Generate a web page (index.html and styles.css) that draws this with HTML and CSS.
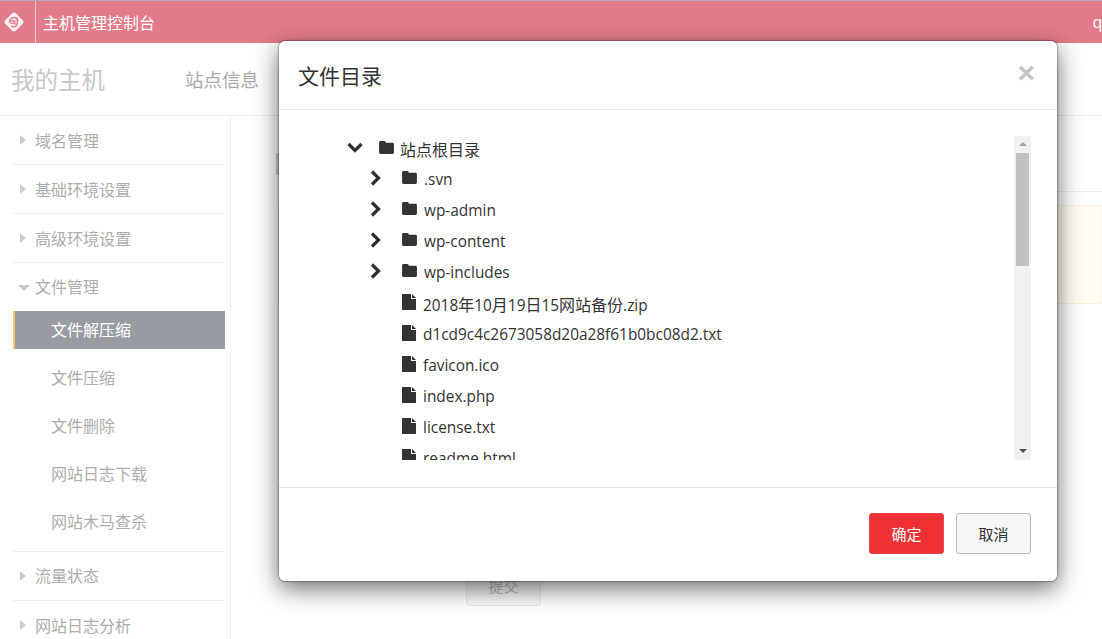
FILE: index.html
```html
<!DOCTYPE html>
<html lang="zh-CN">
<head>
    <meta charset="UTF-8">
    <title>主机管理控制台</title>
    <link rel="stylesheet" href="styles.css">
</head>
<body>
    <svg class="sprites" width="0" height="0">
        <symbol id="i-folder" viewBox="0 0 16 14"><path d="M1.5 0h4.2c.6 0 1 .3 1.2.8l.4 1.2h7.2c.8 0 1.5.7 1.5 1.5v9c0 .8-.7 1.5-1.5 1.5h-13C.7 14 0 13.300 0 12.500v-11C0 .7.700 0 1.500 0z"/></symbol>
        <symbol id="i-file" viewBox="0 0 14 16"><path d="M0 0h9v5h5v11H0z"/><path d="M10 0l4 4h-4z"/></symbol>
        <symbol id="i-right" viewBox="0 0 12 16"><path d="M2 1.500l6.500 6.500L2 14.500" fill="none" stroke="currentColor" stroke-width="3.200"/></symbol>
        <symbol id="i-down" viewBox="0 0 16 12"><path d="M1.500 2l6.500 6.500L14.500 2" fill="none" stroke="currentColor" stroke-width="3.200"/></symbol>
    </svg>

    <header class="topbar">
        <div class="logo-cell">
            <svg class="logo" viewBox="0 0 20 20">
                <path d="M10 .5q1 0 2 1l6.500 6.500q2 2 0 4L12 18.500q-2 2-4 0L1.500 12q-2-2 0-4L8 1.500q1-1 2-1z" fill="#fbeef0"/>
                <path d="M5.500 10.500c0-3 2-5 4.500-5 2.200 0 3.800 1.500 3.800 3.500" fill="none" stroke="#e37c8a" stroke-width="1.500"/>
                <circle cx="8.500" cy="10" r="1.700" fill="none" stroke="#e37c8a" stroke-width="1.200"/>
                <circle cx="12" cy="10.500" r="1.700" fill="none" stroke="#e37c8a" stroke-width="1.200"/>
                <path d="M7 14c2 1.500 4.500 1 6.500-1.500" fill="none" stroke="#e37c8a" stroke-width="1.300"/>
            </svg>
        </div>
        <div class="top-title">主机管理控制台</div>
        <div class="top-user">qq</div>
    </header>

    <div class="subbar">
        <span class="sub-title">我的主机</span>
        <span class="sub-tab">站点信息</span>
    </div>

    <div class="layout">
        <nav class="sidebar">
            <div class="group"><div class="group-head"><i class="tri-right"></i>域名管理</div></div>
            <div class="group"><div class="group-head"><i class="tri-right"></i>基础环境设置</div></div>
            <div class="group"><div class="group-head"><i class="tri-right"></i>高级环境设置</div></div>
            <div class="group">
                <div class="group-head open"><i class="tri-down"></i>文件管理</div>
                <ul class="sub-list">
                    <li class="active">文件解压缩</li>
                    <li>文件压缩</li>
                    <li>文件删除</li>
                    <li>网站日志下载</li>
                    <li>网站木马查杀</li>
                </ul>
            </div>
            <div class="group"><div class="group-head open"><i class="tri-right"></i>流量状态</div></div>
            <div class="group"><div class="group-head"><i class="tri-right"></i>网站日志分析</div></div>
        </nav>

        <main class="content">
            <div class="content-title"></div>
            <div class="notice"></div>
            <div class="submit-row"><button class="btn-submit">提交</button></div>
        </main>
    </div>

    <div class="modal">
        <div class="modal-header">
            <h4>文件目录</h4>
            <span class="close">×</span>
        </div>
        <div class="modal-body">
            <div class="tree-box">
                <ul class="tree">
                    <li class="root"><svg class="arrow down"><use href="#i-down"/></svg><svg class="folder"><use href="#i-folder"/></svg><span class="cjk">站点根目录</span></li>
                    <li><svg class="arrow"><use href="#i-right"/></svg><svg class="folder"><use href="#i-folder"/></svg><span>.svn</span></li>
                    <li><svg class="arrow"><use href="#i-right"/></svg><svg class="folder"><use href="#i-folder"/></svg><span>wp-admin</span></li>
                    <li><svg class="arrow"><use href="#i-right"/></svg><svg class="folder"><use href="#i-folder"/></svg><span>wp-content</span></li>
                    <li><svg class="arrow"><use href="#i-right"/></svg><svg class="folder"><use href="#i-folder"/></svg><span>wp-includes</span></li>
                    <li><svg class="file"><use href="#i-file"/></svg><span>2018<span class="cjk">年</span>10<span class="cjk">月</span>19<span class="cjk">日</span>15<span class="cjk">网站备份</span>.zip</span></li>
                    <li><svg class="file"><use href="#i-file"/></svg><span>d1cd9c4c2673058d20a28f61b0bc08d2.txt</span></li>
                    <li><svg class="file"><use href="#i-file"/></svg><span>favicon.ico</span></li>
                    <li><svg class="file"><use href="#i-file"/></svg><span>index.php</span></li>
                    <li><svg class="file"><use href="#i-file"/></svg><span>license.txt</span></li>
                    <li><svg class="file"><use href="#i-file"/></svg><span>readme.html</span></li>
                </ul>
                <div class="scrollbar">
                    <i class="sb-up"></i>
                    <div class="sb-track"><div class="sb-thumb"></div></div>
                    <i class="sb-down"></i>
                </div>
            </div>
        </div>
        <div class="modal-footer">
            <button class="btn btn-ok">确定</button>
            <button class="btn btn-cancel">取消</button>
        </div>
    </div>
</body>
</html>
```

FILE: styles.css
```css
* {
    box-sizing: border-box;
}

html, body {
    height: 100%;
}

body {
    margin: 0;
    overflow: hidden;
    background: #fff;
    font-family: "Open Sans", "Noto Sans CJK SC", sans-serif;
    font-size: 16px;
    position: relative;
}

ul {
    list-style: none;
    margin: 0;
    padding: 0;
}

.sprites {
    position: absolute;
}

/* top bar */
.topbar {
    height: 43px;
    background: #e37c8a;
    border-top: 1px solid #b9a6c4;
    color: #fff;
    display: flex;
    align-items: center;
}

.logo-cell {
    width: 36px;
    height: 100%;
    border-right: 1px solid #f3c6cc;
    padding-left: 4px;
    display: flex;
    align-items: center;
}

.logo {
    width: 20px;
    height: 20px;
}

.top-title {
    margin-left: 7px;
    font-size: 16px;
}

.top-user {
    margin-left: auto;
    margin-right: -10px;
    font-size: 16px;
}

/* second bar */
.subbar {
    height: 73px;
    border-bottom: 1px solid #eee;
    padding-left: 11px;
    display: flex;
    align-items: center;
}

.sub-title {
    width: 174px;
    font-size: 23.500px;
    color: #c8c8c8;
}

.sub-tab {
    font-size: 18.500px;
    color: #aaa;
}

/* sidebar */
.layout {
    display: flex;
    height: 524px;
}

.sidebar {
    width: 231px;
    padding: 0 5px 0 13px;
    border-right: 1px solid #eee;
    flex-shrink: 0;
}

.group {
    border-bottom: 1px solid #eee;
}

.group-head {
    height: 48px;
    display: flex;
    align-items: center;
    color: #adadad;
    position: relative;
    padding-left: 22px;
}

.group-head.open {
    padding-bottom: 2px;
}

.tri-right {
    position: absolute;
    left: 7px;
    top: 19px;
    border-left: 6px solid #c9ced3;
    border-top: 5px solid transparent;
    border-bottom: 5px solid transparent;
}

.tri-down {
    position: absolute;
    left: 5px;
    top: 22px;
    border-top: 6px solid #c9c9c9;
    border-left: 6px solid transparent;
    border-right: 6px solid transparent;
}

.sub-list {
    padding-bottom: 10px;
}

.sub-list li {
    height: 38px;
    margin-bottom: 10px;
    padding-left: 38px;
    line-height: 38px;
    color: #adadad;
}

.sub-list li:last-child {
    margin-bottom: 0;
}

.sub-list li.active {
    background: #9a9ca3;
    border-left: 2px solid #fbc36e;
    padding-left: 36px;
    color: #fff;
}

/* page behind the dialog */
.content {
    flex: 1;
    padding: 37px 0 0 47px;
}

.content-title {
    height: 39px;
    border-bottom: 1px solid #eee;
    position: relative;
}

.content-title::before {
    content: "";
    position: absolute;
    left: -2px;
    top: 0;
    width: 4px;
    height: 22px;
    background: #c5d2e6;
}

.notice {
    height: 99px;
    margin-top: 13px;
    background: #fffdf3;
    border: 1px solid #fbf2dc;
}

.submit-row {
    margin-top: 261px;
    padding-left: 188px;
}

.btn-submit {
    width: 75px;
    height: 41px;
    background: #f7f7f7;
    border: 1px solid #e8e8e8;
    border-radius: 3px;
    color: #bcbcbc;
    font: inherit;
    font-size: 15px;
}

/* dialog */
.modal {
    position: absolute;
    left: 279px;
    top: 41px;
    width: 778px;
    height: 540px;
    background: #fff;
    border-radius: 6px;
    box-shadow: 0 0 1px 1px rgba(0, 0, 0, .25), 0 7px 24px rgba(0, 0, 0, .6);
    display: flex;
    flex-direction: column;
}

.modal-header {
    height: 69px;
    border-bottom: 1px solid #e5e5e5;
    padding: 0 22px 0 19px;
    display: flex;
    align-items: center;
    justify-content: space-between;
}

.modal-header h4 {
    margin: 0;
    font-size: 21px;
    font-weight: 400;
    color: #333;
}

.close {
    font-family: "Liberation Sans", sans-serif;
    font-size: 30px;
    font-weight: 700;
    line-height: 1;
    color: #c4c4c4;
    margin-top: -4px;
}

.modal-body {
    height: 377px;
    padding: 26px 26px 0 68px;
}

.tree-box {
    height: 324px;
    display: flex;
    overflow: hidden;
}

.tree {
    flex: 1;
    margin-top: -3px;
    color: #333;
    font-size: 15.400px;
}

.tree .cjk {
    font-size: 16px;
}

.tree li {
    height: 31px;
    display: flex;
    align-items: center;
    padding-left: 23px;
    position: relative;
}

.tree li.root {
    padding-left: 0;
}

.arrow {
    width: 12px;
    height: 16px;
    color: #2f2f2f;
    margin-right: 20px;
    margin-top: -4px;
    flex-shrink: 0;
}

.arrow.down {
    width: 16px;
    height: 12px;
    margin-right: 16px;
    margin-top: -1px;
}

.folder {
    width: 15px;
    height: 13px;
    fill: #333;
    margin-right: 7px;
    margin-top: -5px;
    flex-shrink: 0;
}

.tree li.root .folder {
    margin-top: -3px;
    margin-right: 6px;
}

.file {
    width: 14px;
    height: 16px;
    fill: #333;
    margin-left: 32px;
    margin-right: 7px;
    margin-top: -3px;
    flex-shrink: 0;
}

.scrollbar {
    width: 17px;
    background: #f1f1f1;
    display: flex;
    flex-direction: column;
    align-items: center;
    flex-shrink: 0;
}

.sb-up, .sb-down {
    height: 17px;
    width: 100%;
    position: relative;
    flex-shrink: 0;
}

.sb-up::after, .sb-down::after {
    content: "";
    position: absolute;
    left: 5px;
    top: 6px;
    border-left: 4px solid transparent;
    border-right: 4px solid transparent;
}

.sb-up::after {
    border-bottom: 4px solid #a3a3a3;
}

.sb-down::after {
    border-top: 4px solid #505050;
}

.sb-track {
    flex: 1;
    width: 100%;
    padding: 0 2px;
}

.sb-thumb {
    height: 113px;
    background: #c1c1c1;
}

.modal-footer {
    flex: 1;
    border-top: 1px solid #e5e5e5;
    padding: 25px 26px 0 0;
    display: flex;
    justify-content: flex-end;
    gap: 12px;
}

.btn {
    width: 75px;
    height: 41px;
    border-radius: 3px;
    font: inherit;
    font-size: 15px;
}

.btn-ok {
    background: #ee3134;
    border: 1px solid #e8474a;
    color: #fff;
}

.btn-cancel {
    background: #f6f6f6;
    border: 1px solid #bbb;
    color: #333;
}
```
